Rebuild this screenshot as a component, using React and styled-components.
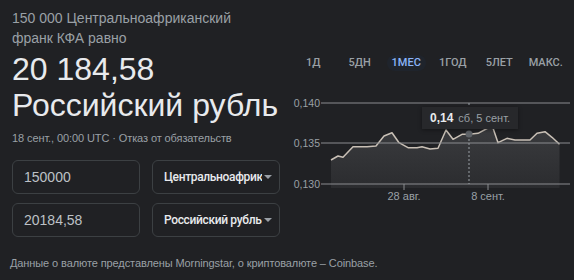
import React from "react";
import styled, { createGlobalStyle } from "styled-components";

const GlobalStyle = createGlobalStyle`
  body {
    margin: 0;
    background: #202124;
    font-family: "Liberation Sans", Arial, sans-serif;
  }
`;

const Page = styled.div`
  width: 574px;
  height: 280px;
  background: #202124;
  overflow: hidden;
  display: flex;
  flex-direction: column;
`;

const Main = styled.div`
  display: flex;
  height: 246px;
`;

const LeftCol = styled.div`
  width: 288px;
  padding: 8px 0 0 12px;
  box-sizing: border-box;
`;

const Lead = styled.div`
  font-size: 14px;
  line-height: 20px;
  color: #9aa0a6;
`;

const BigValue = styled.div`
  font-size: 32px;
  line-height: 36px;
  color: #e8eaed;
  margin-top: 3px;
`;

const Meta = styled.div`
  font-size: 11px;
  line-height: 14px;
  letter-spacing: -0.1px;
  color: #9aa0a6;
  margin-top: 8px;
`;

const Form = styled.div`
  display: grid;
  grid-template-columns: 128px 128px;
  column-gap: 12px;
  row-gap: 9px;
  margin-top: 15px;
`;

const Field = styled.div`
  height: 34px;
  border: 1px solid #3c4043;
  border-radius: 6px;
  box-sizing: border-box;
  display: flex;
  align-items: center;
  padding: 0 11px;
  font-size: 14px;
  color: #bdc1c6;
`;

const Select = styled(Field)`
  padding: 0 7px 0 11px;
  font-family: Roboto, Arial, sans-serif;
  font-size: 12px;
  font-weight: 500;
  letter-spacing: -0.35px;
  color: #e8eaed;
  gap: 2px;
`;

const SelectText = styled.span`
  flex: 1;
  min-width: 0;
  white-space: nowrap;
  overflow: hidden;
`;

const Caret = styled.span`
  width: 0;
  height: 0;
  border-left: 4px solid transparent;
  border-right: 4px solid transparent;
  border-top: 4px solid #9aa0a6;
  flex: none;
`;

const RightCol = styled.div`
  flex: 1;
  display: flex;
  flex-direction: column;
`;

const Tabs = styled.div`
  display: flex;
  padding: 55px 0 0 2px;
`;

const Tab = styled.div`
  width: 46.5px;
  display: flex;
  justify-content: center;
`;

const TabLabel = styled.span`
  font-family: Roboto, Arial, sans-serif;
  font-size: 11px;
  font-weight: 500;
  line-height: 16px;
  padding: 0 5px;
  border-radius: 8px;
  color: ${(p) => (p.$active ? "#8ab4f8" : "#9aa0a6")};
  background: ${(p) => (p.$active ? "#1f242c" : "transparent")};
`;

const ChartBox = styled.div`
  position: relative;
  margin-top: 21px;
  height: 115px;
`;

const Tooltip = styled.div`
  position: absolute;
  left: 134px;
  top: 15px;
  height: 22px;
  padding: 0 8px;
  display: flex;
  align-items: center;
  gap: 5px;
  background: #27282b;
  box-shadow: 0 1px 4px rgba(0, 0, 0, 0.4);
  font-size: 11px;
  color: #9aa0a6;
  white-space: nowrap;
`;

const TipValue = styled.b`
  color: #e8eaed;
  font-size: 12px;
`;

const Footer = styled.div`
  padding: 10px 0 0 10px;
  font-size: 11px;
  line-height: 14px;
  letter-spacing: -0.1px;
  color: #9aa0a6;
`;

const pts = [
  [331, 160], [338, 156], [343, 157.3], [353, 146.7], [367, 146.7], [376, 146],
  [384, 136], [392, 132.7], [399, 142.7], [408, 147.7], [417, 147.7], [422, 146.7],
  [430, 149], [438, 148.3], [446, 130], [453, 139.3], [462, 134.3], [469, 134.3],
  [478, 133.3], [488, 128], [493, 128], [498, 142.7], [507, 138.3], [515, 140],
  [530, 140], [537, 133.3], [545, 131.7], [552, 137.3], [559.5, 144.3],
];

function Chart() {
  const line = pts.map(([x, y], i) => `${i ? "L" : "M"}${x} ${y}`).join(" ");
  const area = `${line} L559.5 188 L331 188 Z`;
  return (
    <svg width="286" height="115" style={{ display: "block" }}>
      <defs>
        <linearGradient id="fill" x1="0" y1="0" x2="0" y2="1">
          <stop offset="0" stopColor="#3a3b3e" />
          <stop offset="1" stopColor="#2b2c2f" />
        </linearGradient>
      </defs>
      <g transform="translate(-288,-92)" fontFamily="Liberation Sans, Arial, sans-serif">
        <path d={area} fill="url(#fill)" />
        <path d={line} fill="none" stroke="#c9c0b6" strokeWidth="1.5" strokeLinejoin="round" />
        {[[103, "0,140"], [143, "0,135"], [184, "0,130"]].map(([y, t]) => (
          <g key={t}>
            <line x1="321" x2="570" y1={y} y2={y} stroke="#8a8c8f" strokeWidth="1" />
            <text x="320" y={y + 4} textAnchor="end" fontSize="10.5" fill="#9aa0a6">
              {t}
            </text>
          </g>
        ))}
        <line x1="469" x2="469" y1="103" y2="184" stroke="#9aa0a6" strokeDasharray="2 2" />
        <circle cx="469" cy="134" r="3.5" fill="#5f6368" />
        {[[404, "28 авг."], [488, "8 сент."]].map(([x, t]) => (
          <g key={t}>
            <line x1={x} x2={x} y1="184" y2="190" stroke="#8a8c8f" />
            <text x={x} y="200" textAnchor="middle" fontSize="11" fill="#9aa0a6">
              {t}
            </text>
          </g>
        ))}
      </g>
    </svg>
  );
}

const tabs = ["1Д", "5ДН", "1МЕС", "1ГОД", "5ЛЕТ", "МАКС."];

export default function App() {
  return (
    <>
      <GlobalStyle />
      <Page>
        <Main>
          <LeftCol>
            <Lead>
              150 000 Центральноафриканский
              <br />
              франк КФА равно
            </Lead>
            <BigValue>
              20 184,58
              <br />
              Российский рубль
            </BigValue>
            <Meta>18 сент., 00:00 UTC · Отказ от обязательств</Meta>
            <Form>
              <Field>150000</Field>
              <Select>
                <SelectText>Центральноафриканский франк КФА</SelectText>
                <Caret />
              </Select>
              <Field>20184,58</Field>
              <Select>
                <SelectText>Российский рубль</SelectText>
                <Caret />
              </Select>
            </Form>
          </LeftCol>
          <RightCol>
            <Tabs>
              {tabs.map((t) => (
                <Tab key={t}>
                  <TabLabel $active={t === "1МЕС"}>{t}</TabLabel>
                </Tab>
              ))}
            </Tabs>
            <ChartBox>
              <Chart />
              <Tooltip>
                <TipValue>0,14</TipValue>
                <span>сб, 5 сент.</span>
              </Tooltip>
            </ChartBox>
          </RightCol>
        </Main>
        <Footer>Данные о валюте представлены Morningstar, о криптовалюте – Coinbase.</Footer>
      </Page>
    </>
  );
}
